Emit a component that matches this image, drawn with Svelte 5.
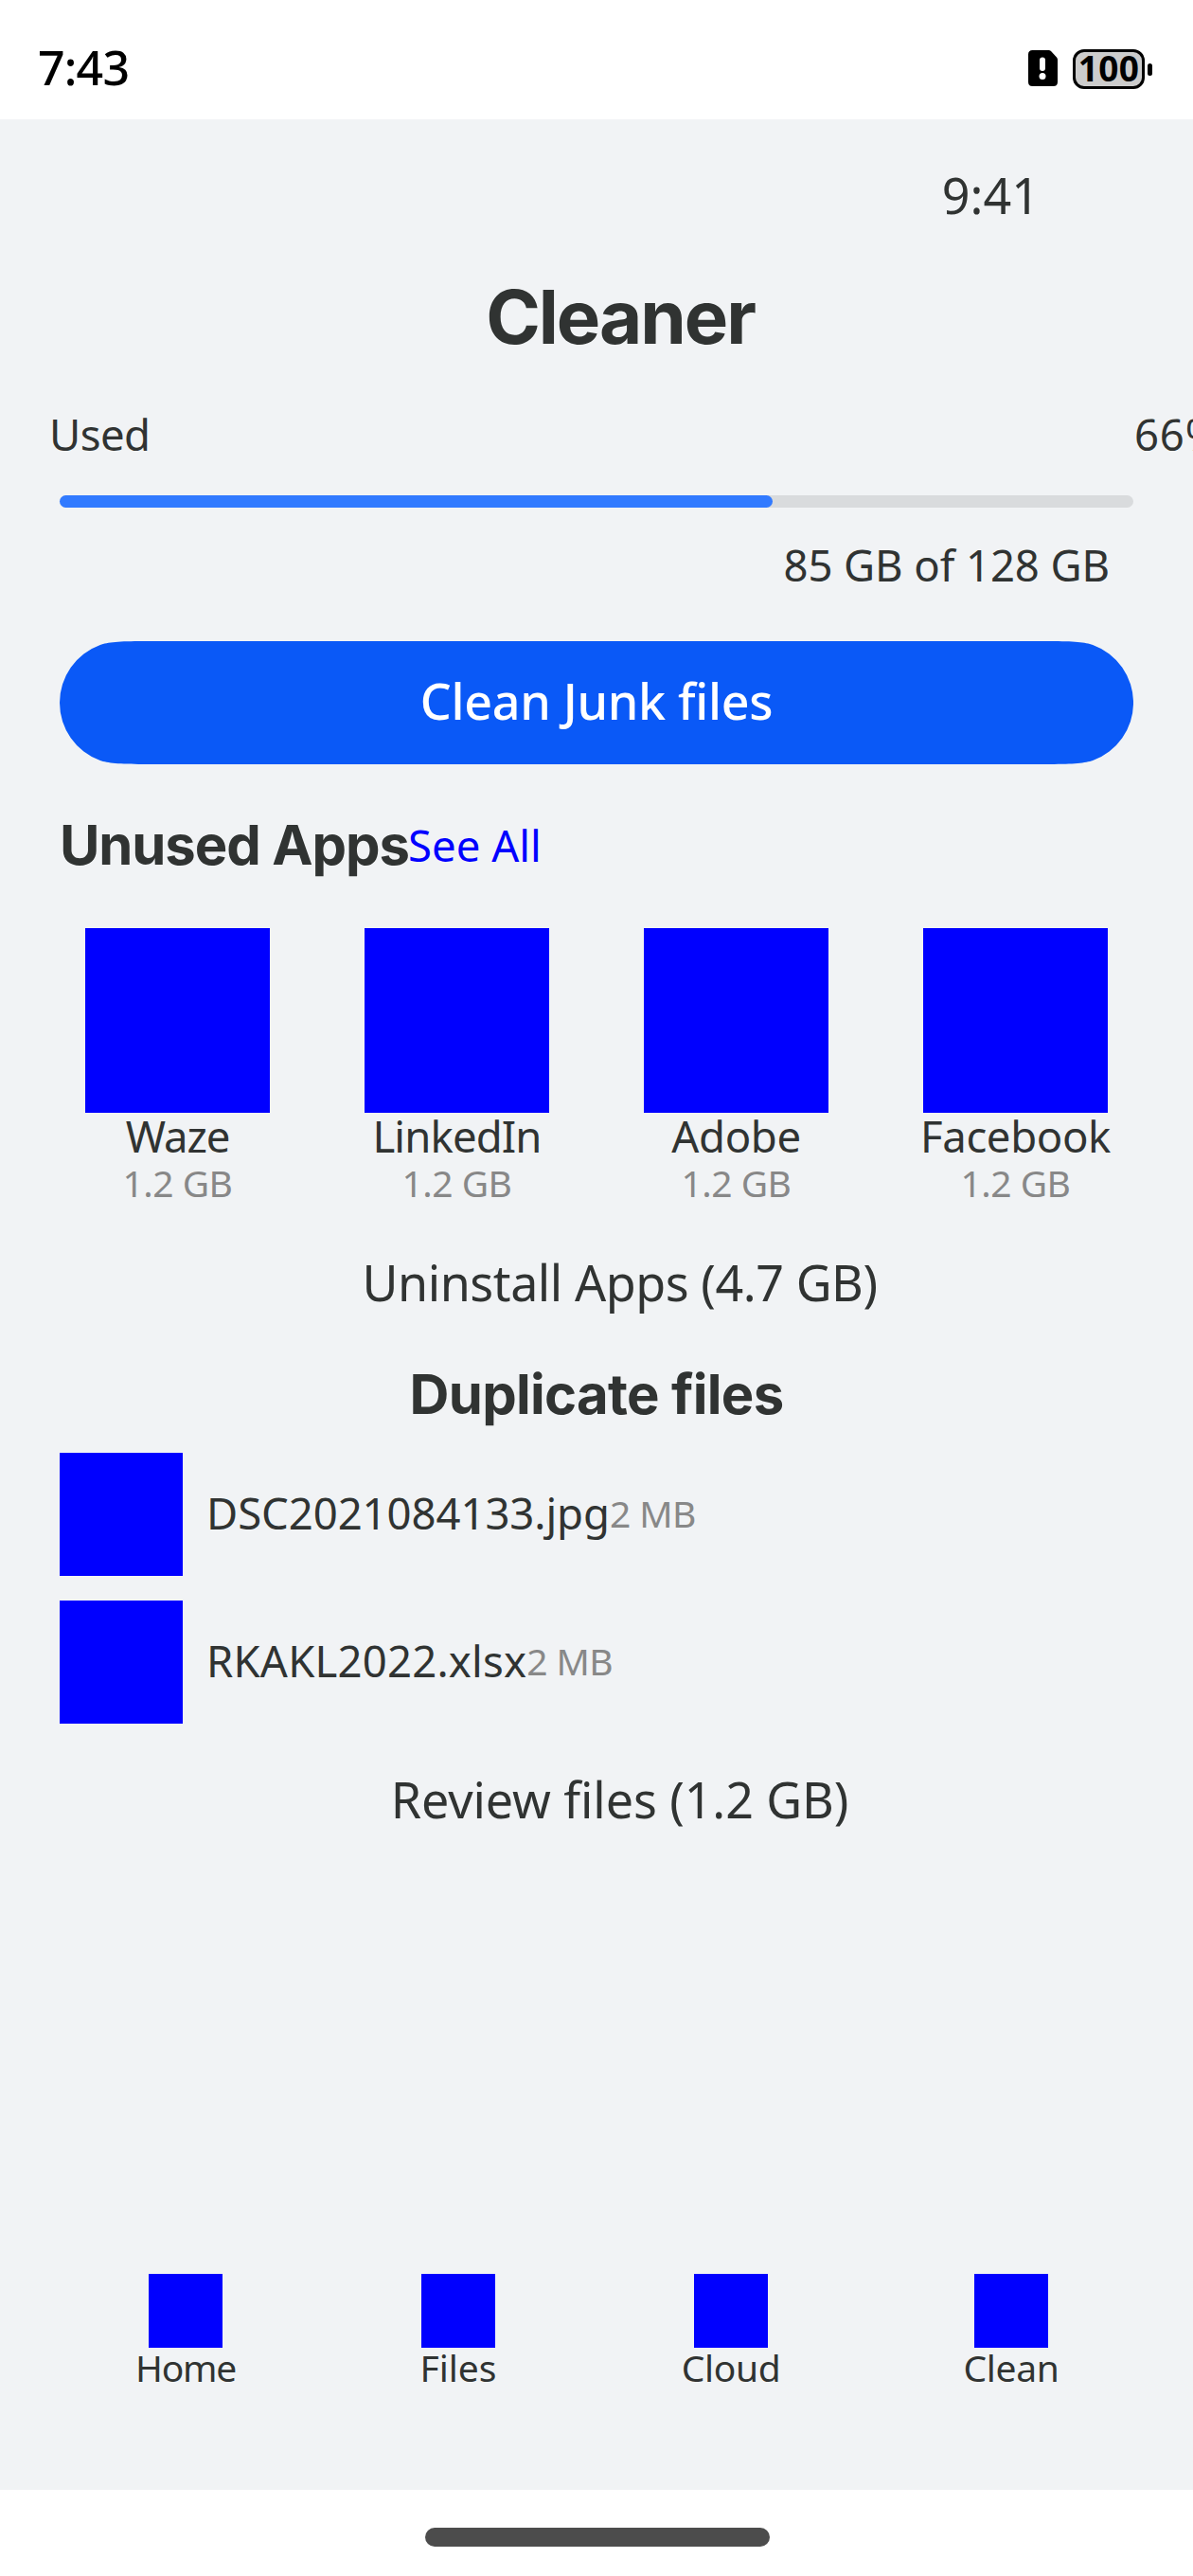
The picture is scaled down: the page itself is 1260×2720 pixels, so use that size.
<script>
  const apps = [
    { name: 'Waze', size: '1.2 GB', fit: 'waze' },
    { name: 'LinkedIn', size: '1.2 GB', fit: 'linkedin' },
    { name: 'Adobe', size: '1.2 GB', fit: 'adobe' },
    { name: 'Facebook', size: '1.2 GB', fit: 'facebook' }
  ];
  const files = [
    { name: 'DSC2021084133.jpg', size: '2 MB', fit: 'photo' },
    { name: 'RKAKL2022.xlsx', size: '2 MB', fit: 'sheet' }
  ];
  const tabs = ['Home', 'Files', 'Cloud', 'Clean'];
  const used = 85;
  const total = 128;
</script>

<div class="screen">
  <header class="status">
    <span class="clock">7:43</span>
    <div class="indicators">
      <svg class="sim" viewBox="0 0 31 38">
        <path d="M4.500 0H21.500Q23 0 24 1L30 7.500Q31 8.500 31 10V33.500Q31 38 26.500 38H4.500Q0 38 0 33.500V4.500Q0 0 4.500 0Z" fill="#000" />
        <rect x="12" y="7.500" width="6" height="14.500" rx="3" fill="#fff" />
        <circle cx="15" cy="27.600" r="3.500" fill="#fff" />
      </svg>
      <div class="battery"><span>100</span></div>
      <i class="cap"></i>
    </div>
  </header>

  <main>
    <p class="time">9:41</p>
    <h1>Cleaner</h1>

    <div class="usage">
      <span>Used</span>
      <span class="percent">66%</span>
    </div>
    <div class="track"><div class="fill" style="width: {(used / total) * 100}%"></div></div>
    <p class="capacity">{used} GB of {total} GB</p>

    <button>
      <svg viewBox="0 0 1134 130">
        <path d="M0 65A65 65 0 0 1 42.800 3.900C50.500 1.200 63 0 88 0H1046C1071 0 1083.500 1.200 1091.200 3.900A65 65 0 0 1 1091.200 126.100C1083.500 128.800 1071 130 1046 130H88C63 130 50.500 128.800 42.800 126.100A65 65 0 0 1 0 65Z" fill="#0a59f7" />
      </svg>
      <span>Clean Junk files</span>
    </button>

    <div class="heading">
      <h2 class="unused">Unused Apps</h2>
      <a href="#all">See All</a>
    </div>

    <div class="apps">
      {#each apps as app}
        <div class="app">
          <div class="tile"></div>
          <span class="name {app.fit}">{app.name}</span>
          <span class="size">{app.size}</span>
        </div>
      {/each}
    </div>
    <p class="action uninstall">Uninstall Apps (4.7 GB)</p>

    <h2 class="duplicates">Duplicate files</h2>
    <div class="file-list">
      {#each files as file}
        <div class="file">
          <div class="thumb"></div>
          <div class="info">
            <span class={file.fit}>{file.name}</span>
            <span class="weight">{file.size}</span>
          </div>
        </div>
      {/each}
    </div>
    <p class="action review">Review files (1.2 GB)</p>

    <nav>
      {#each tabs as tab}
        <div class="tab">
          <div class="icon"></div>
          <span class="label-{tab.toLowerCase()}">{tab}</span>
        </div>
      {/each}
    </nav>
  </main>

  <footer><div class="handle"></div></footer>
</div>

<style>
  :global(body) { margin: 0; background: #fff; }
  .screen {
    width: 1260px;
    height: 2720px;
    display: flex;
    flex-direction: column;
    overflow: hidden;
    background: #fff;
    color: #303332;
    font-family: "Noto Sans", "Open Sans", sans-serif;
    font-size: 45.5px;
    white-space: nowrap;
  }
  p, h1, h2 { margin: 0; }

  .status {
    height: 126px;
    box-sizing: border-box;
    padding: 0 43px 0 40px;
    display: flex;
    justify-content: space-between;
    color: #000;
  }
  .clock { font-size: 50px; font-weight: 500; line-height: 142px; letter-spacing: -0.8px; }
  .indicators { display: flex; align-items: center; padding-top: 20px; }
  .sim { width: 31px; height: 38px; margin: -2px 16px 0 0; }
  .battery {
    width: 76px;
    height: 42px;
    box-sizing: border-box;
    border: 3px solid #000;
    border-radius: 12px;
    background: #ccc;
    display: flex;
    justify-content: center;
  }
  .battery span { font-size: 37px; font-weight: 700; line-height: 34px; letter-spacing: 0.3px; }
  .cap { width: 5px; height: 13px; margin-left: 3px; border-radius: 2.5px; background: #000; }

  main {
    height: 2503px;
    display: flex;
    flex-direction: column;
    background: #f1f3f5;
    overflow: hidden;
  }
  .time { margin-top: 49px; padding-right: 162px; text-align: right; font-size: 52px; line-height: 62px; }
  h1 {
    margin-top: 52px;
    padding-left: 50px;
    text-align: center;
    font: 700 78px/92px Inter, sans-serif;
    letter-spacing: -2.06px;
  }
  .usage { margin-top: 50px; padding-left: 52px; display: flex; justify-content: space-between; line-height: 54px; }
  .usage span { letter-spacing: -0.57px; }
  .usage .percent { flex: 0 0 62px; min-width: 0; letter-spacing: 0.8px; }
  .track { margin: 38px 63px 0; height: 13px; border-radius: 6.5px; background: #d9dbdd; }
  .fill { height: 13px; border-radius: 6.5px; background: #317aff; }
  .capacity { margin-top: 33px; padding-right: 88px; text-align: right; line-height: 54px; letter-spacing: -0.1px; }

  button {
    position: relative;
    margin: 54px 63px 0;
    height: 130px;
    padding: 0 0 4px;
    border: 0;
    background: none;
    color: #fff;
    font: 500 52px/126px "Noto Sans", sans-serif;
    letter-spacing: -0.3px;
  }
  button svg { position: absolute; inset: 0; width: 1134px; height: 130px; }
  button span { position: relative; }

  h2 { font: 700 58px/68px Inter, sans-serif; }
  .heading { margin-top: 51px; padding-left: 63px; display: flex; line-height: 68px; }
  .unused { width: 368px; letter-spacing: -1.1px; }
  .heading a { color: #00f; text-decoration: none; }

  .apps { margin: 54px 40px 0; display: grid; grid-template-columns: repeat(4, 295px); }
  .app { display: flex; flex-direction: column; align-items: center; }
  .tile { width: 195px; height: 195px; background: #00f; }
  .name, .size { line-height: 49px; }
  .size, .weight { font-size: 39px; color: #888; }
  .size { letter-spacing: -0.5px; }
  .waze { letter-spacing: -1.1px; }
  .linkedin { letter-spacing: -0.87px; }
  .adobe, .facebook { letter-spacing: -0.38px; }

  .action { padding-left: 49px; text-align: center; font-size: 52px; line-height: 62px; }
  .uninstall { margin-top: 50px; letter-spacing: -0.44px; }
  .review { margin-top: 49px; letter-spacing: -0.09px; }
  .duplicates { margin-top: 53px; text-align: center; letter-spacing: -0.7px; }

  .file-list { margin: 28px 63px 0; display: grid; gap: 26px; }
  .file { height: 130px; display: flex; gap: 25px; }
  .thumb { width: 130px; height: 130px; background: #00f; }
  .info { display: flex; line-height: 127px; }
  .photo { letter-spacing: -0.07px; }
  .sheet { letter-spacing: 0.2px; }
  .weight { letter-spacing: -0.6px; }

  nav {
    margin: auto 40px 108px 52px;
    display: grid;
    grid-template-columns: 288px 288px 288px 304px;
    font-size: 39px;
    line-height: 42px;
  }
  .tab { display: flex; flex-direction: column; align-items: center; }
  .icon { width: 78px; height: 78px; background: #00f; }
  .label-home { letter-spacing: -1.3px; }
  .label-cloud, .label-clean { letter-spacing: -0.38px; }

  footer { height: 91px; display: flex; justify-content: center; align-items: center; }
  .handle { width: 364px; height: 20px; margin: 8px 0 0 2px; border-radius: 10px; background: #4c4c4c; }
</style>
